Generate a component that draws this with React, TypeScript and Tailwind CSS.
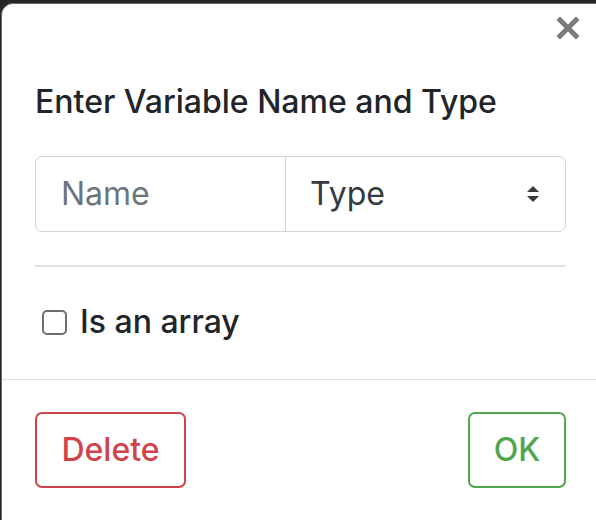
import React from "react";

function CloseIcon() {
  return (
    <svg width="24" height="24" viewBox="0 0 24 24" aria-hidden="true">
      <path
        d="M4 4 L20 20 M20 4 L4 20"
        stroke="#7b7b7b"
        strokeWidth="5"
        strokeLinecap="square"
      />
    </svg>
  );
}

function SelectArrows() {
  return (
    <svg width="16" height="20" viewBox="0 0 16 20" aria-hidden="true">
      <path d="M2 8 L8 2 L14 8 Z" fill="#343a40" />
      <path d="M2 12 L8 18 L14 12 Z" fill="#343a40" />
    </svg>
  );
}

export default function App() {
  return (
    <div
      className="h-[520px] w-[596px] overflow-hidden bg-[#262626] pt-[3px] pl-[1px]"
      style={{ fontFamily: "Inter, 'Noto Sans', sans-serif" }}
    >
      <div className="flex h-[530px] w-[610px] flex-col rounded-[12px] border border-[#6b6b6b] bg-white">
        <div className="flex w-[595px] justify-end pr-[17px] pt-[12px]">
          <button className="flex h-[24px] w-[24px] items-center justify-center">
            <CloseIcon />
          </button>
        </div>

        <div className="w-[595px] pl-[33px] pr-[31px] pt-[43px]">
          <h5 className="text-[32px] leading-[38px] font-medium text-[#212529]">
            Enter Variable Name and Type
          </h5>

          <div className="mt-[35px] flex h-[76px] rounded-[7px] border border-[#ced4da] text-[32px]">
            <div className="flex w-[250px] items-center border-r border-[#ced4da] pl-[25px] text-[#6c757d]">
              Name
            </div>
            <div className="flex flex-1 items-center justify-between pl-[24px] pr-[24px] text-[#343a40]">
              <span>Type</span>
              <SelectArrows />
            </div>
          </div>

          <hr className="mt-[33px] border-t-2 border-[#e0e0e0]" />

          <label className="mt-[37px] flex items-center gap-[13px] pl-[7px] text-[32px] leading-[36px] text-[#212529]">
            <span className="h-[25px] w-[25px] rounded-[5px] border-2 border-[#6e6e6e]" />
            <span className="font-medium">Is an array</span>
          </label>
        </div>

        <div className="mt-[39px] flex w-[595px] justify-between border-t border-[#dee2e6] pl-[33px] pr-[31px] pt-[32px]">
          <button className="h-[76px] w-[151px] rounded-[7px] border-2 border-[#d1434a] text-[32px] font-medium text-[#d1434a]">
            Delete
          </button>
          <button className="h-[76px] w-[98px] rounded-[7px] border-2 border-[#4fa64f] text-[32px] font-medium text-[#4fa64f]">
            OK
          </button>
        </div>
      </div>
    </div>
  );
}
